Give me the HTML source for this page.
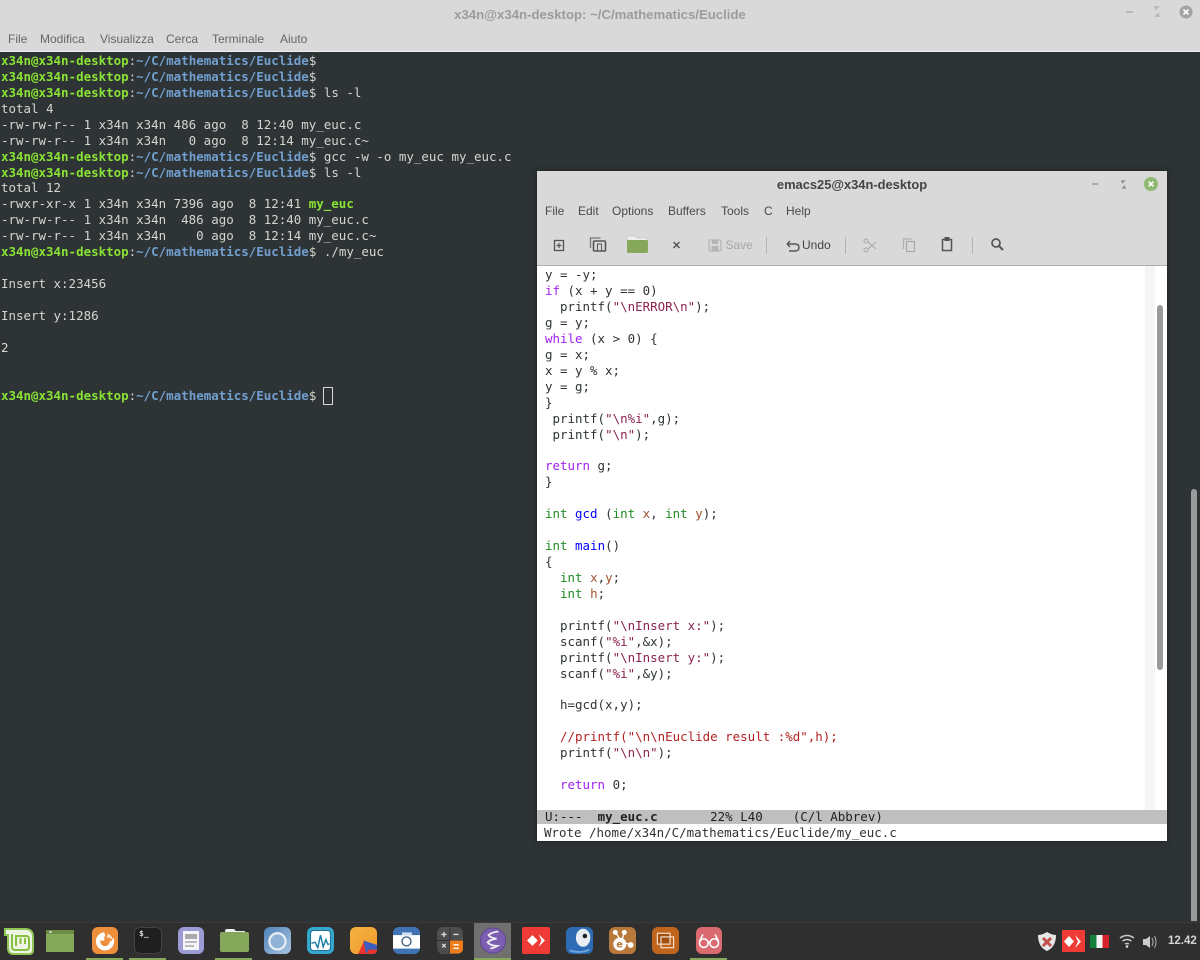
<!DOCTYPE html>
<html><head><meta charset="utf-8"><style>
html,body{margin:0;padding:0;background:#2e3436}
body{width:1200px;height:960px;position:relative;overflow:hidden;font-family:"DejaVu Sans","Liberation Sans",sans-serif}
#w{position:absolute;left:0;top:0;width:1200px;height:960px;overflow:hidden;background:#2e3436;filter:blur(.3px)}
div{position:absolute}
.m{font-family:"DejaVu Sans Mono","Liberation Mono",monospace;font-size:12.47px;line-height:16px;white-space:pre;height:16px}
.t{color:#d3d7cf;left:1px}
.g{color:#8ae234;font-weight:bold}
.b{color:#729fcf;font-weight:bold}
.e{color:#2e3436;left:545px}
.k{color:#a020f0}.s{color:#8b2252}.ty{color:#228b22}.v{color:#a0522d}.f{color:#0000ff}.c{color:#b22222}
.menu{font-family:"Liberation Sans",sans-serif;font-size:12px;color:#4a4a4a;white-space:pre;line-height:14px}
.ic{width:27px;height:27px;top:927px;border-radius:6px}
svg{position:absolute;overflow:visible}
svg.i{top:927px}
</style></head><body><div id="w">
<div style="left:0;top:0;width:1200px;height:52px;background:#d9d9d9;border-bottom:1px solid #f0f0f0;box-sizing:border-box"></div>
<div style="left:0;top:7px;width:1200px;text-align:center;font-family:'Liberation Sans',sans-serif;font-size:13.2px;font-weight:bold;color:#9c9c9c;line-height:15px">x34n@x34n-desktop: ~/C/mathematics/Euclide</div>
<div class="menu" style="left:8px;top:32px;color:#666">File</div>
<div class="menu" style="left:40px;top:32px;color:#666">Modifica</div>
<div class="menu" style="left:100px;top:32px;color:#666">Visualizza</div>
<div class="menu" style="left:166px;top:32px;color:#666">Cerca</div>
<div class="menu" style="left:212px;top:32px;color:#666">Terminale</div>
<div class="menu" style="left:280px;top:32px;color:#666">Aiuto</div>
<svg style="left:1060px;top:0" width="140" height="30"><path d="M66 12h7" stroke="#aaa" stroke-width="1.500"/><path d="M95 10l3-3h-4M99 13l-3 3h4" stroke="#b5b5b5" stroke-width="1.400" fill="none"/><circle cx="126" cy="12" r="6.500" fill="#a3a3a3"/><path d="M123.500 9.500l5 5M128.500 9.500l-5 5" stroke="#fff" stroke-width="1.600"/></svg>

<div class="m t" style="top:53px"><span class="g">x34n@x34n-desktop</span>:<span class="b">~/C/mathematics/Euclide</span>$</div>
<div class="m t" style="top:69px"><span class="g">x34n@x34n-desktop</span>:<span class="b">~/C/mathematics/Euclide</span>$</div>
<div class="m t" style="top:85px"><span class="g">x34n@x34n-desktop</span>:<span class="b">~/C/mathematics/Euclide</span>$ ls -l</div>
<div class="m t" style="top:101px">total 4</div>
<div class="m t" style="top:117px">-rw-rw-r-- 1 x34n x34n 486 ago  8 12:40 my_euc.c</div>
<div class="m t" style="top:133px">-rw-rw-r-- 1 x34n x34n   0 ago  8 12:14 my_euc.c~</div>
<div class="m t" style="top:149px"><span class="g">x34n@x34n-desktop</span>:<span class="b">~/C/mathematics/Euclide</span>$ gcc -w -o my_euc my_euc.c</div>
<div class="m t" style="top:165px"><span class="g">x34n@x34n-desktop</span>:<span class="b">~/C/mathematics/Euclide</span>$ ls -l</div>
<div class="m t" style="top:180px">total 12</div>
<div class="m t" style="top:196px">-rwxr-xr-x 1 x34n x34n 7396 ago  8 12:41 <span class="g">my_euc</span></div>
<div class="m t" style="top:212px">-rw-rw-r-- 1 x34n x34n  486 ago  8 12:40 my_euc.c</div>
<div class="m t" style="top:228px">-rw-rw-r-- 1 x34n x34n    0 ago  8 12:14 my_euc.c~</div>
<div class="m t" style="top:244px"><span class="g">x34n@x34n-desktop</span>:<span class="b">~/C/mathematics/Euclide</span>$ ./my_euc</div>
<div class="m t" style="top:276px">Insert x:23456</div>
<div class="m t" style="top:308px">Insert y:1286</div>
<div class="m t" style="top:340px">2</div>
<div class="m t" style="top:388px"><span class="g">x34n@x34n-desktop</span>:<span class="b">~/C/mathematics/Euclide</span>$</div>
<div style="left:323px;top:387px;width:8px;height:16px;border:1px solid #d3d7cf"></div>
<div style="left:1191px;top:489px;width:6px;height:432px;background:#9a9c9c;border-radius:3px 3px 0 0"></div>

<!-- emacs -->
<div style="left:537px;top:171px;width:630px;height:670px;background:#fff;box-shadow:0 0 6px #1c2022"></div>
<div style="left:537px;top:171px;width:630px;height:95px;background:#d9d9d9;border-bottom:1px solid #aeaeae;box-sizing:border-box"></div>
<div style="left:537px;top:177px;width:630px;text-align:center;font-family:'Liberation Sans',sans-serif;font-size:12.9px;font-weight:bold;color:#444;line-height:15px">emacs25@x34n-desktop</div>
<svg style="left:1085px;top:175px" width="80" height="20"><path d="M7 9h6" stroke="#999" stroke-width="1.500"/><path d="M37 8l2-2h-3M40 11l-2 2h3" stroke="#888" stroke-width="1.300" fill="none"/><circle cx="66" cy="9" r="7" fill="#8fb871"/><path d="M63.700 6.700l4.600 4.600M68.300 6.700l-4.600 4.600" stroke="#fff" stroke-width="1.600"/></svg>
<div class="menu" style="left:545px;top:204px">File</div>
<div class="menu" style="left:578px;top:204px">Edit</div>
<div class="menu" style="left:612px;top:204px">Options</div>
<div class="menu" style="left:668px;top:204px">Buffers</div>
<div class="menu" style="left:721px;top:204px">Tools</div>
<div class="menu" style="left:764px;top:204px">C</div>
<div class="menu" style="left:786px;top:204px">Help</div>
<svg style="left:537px;top:225px" width="630" height="40">
<rect x="17.500" y="15.500" width="9" height="10" fill="none" stroke="#555" stroke-width="1.300"/><path d="M22 18v5M19.500 20.500h5" stroke="#555" stroke-width="1.200"/>
<path d="M53.500 23v-10h10" fill="none" stroke="#777" stroke-width="1.300"/><rect x="56.500" y="16" width="12" height="10" rx="1" fill="none" stroke="#555" stroke-width="1.600"/><rect x="60.500" y="19" width="4" height="7" fill="none" stroke="#555"/>
<path d="M90 16v-3q0-2 2-2h6l2 2h9q2 0 2 2v1z" fill="#eee" stroke="#bbb" stroke-width=".5"/><rect x="90" y="15" width="21" height="13" rx="1.500" fill="#86a85a"/>
<path d="M136.500 17l6 6M142.500 17l-6 6" stroke="#555" stroke-width="1.500"/>
<rect x="172" y="15" width="12" height="11" rx="1" fill="none" stroke="#b5b5b5" stroke-width="1.200"/><rect x="175" y="15" width="6" height="4" fill="#b5b5b5"/><rect x="174.500" y="21" width="7" height="5" fill="#b5b5b5"/>
<text x="188.500" y="24" font-family="Liberation Sans" font-size="12" fill="#a6a6a6">Save</text>
<path d="M229.500 12v17M308.500 12v17M435.500 12v17" stroke="#b3b3b3"/>
<path d="M250 19h8q4 0 4 3.500t-4 3.500h-6M250 19l3-3M250 19l3 3" fill="none" stroke="#555" stroke-width="1.400"/>
<text x="265" y="24" font-family="Liberation Sans" font-size="12" fill="#444">Undo</text>
<circle cx="329" cy="16" r="2" fill="none" stroke="#a8a8a8"/><circle cx="329" cy="25" r="2" fill="none" stroke="#a8a8a8"/><path d="M331 17l8 7M331 24l8-7" stroke="#a8a8a8" stroke-width="1.100"/>
<path d="M366.500 24v-10h8" fill="none" stroke="#b0b0b0" stroke-width="1.200"/><rect x="369.500" y="16.500" width="8" height="10" fill="none" stroke="#aaa" stroke-width="1.200"/>
<rect x="405.500" y="14.500" width="9" height="11" fill="none" stroke="#555" stroke-width="1.500"/><rect x="407.500" y="12" width="5" height="4" fill="#555"/>
<circle cx="459" cy="18" r="4" fill="none" stroke="#555" stroke-width="1.700"/><path d="M462 21l4 4" stroke="#555" stroke-width="2"/>
</svg>
<div style="left:1145px;top:266px;width:10px;height:544px;background:#f5f5f5"></div>
<div style="left:1157px;top:305px;width:6px;height:365px;background:#9a9a9a;border-radius:3px"></div>
<div class="m e" style="top:267px">y = -y;</div>
<div class="m e" style="top:283px"><span class="k">if</span> (x + y == 0)</div>
<div class="m e" style="top:299px">  printf(<span class="s">"\nERROR\n"</span>);</div>
<div class="m e" style="top:315px">g = y;</div>
<div class="m e" style="top:331px"><span class="k">while</span> (x &gt; 0) {</div>
<div class="m e" style="top:347px">g = x;</div>
<div class="m e" style="top:363px">x = y % x;</div>
<div class="m e" style="top:379px">y = g;</div>
<div class="m e" style="top:395px">}</div>
<div class="m e" style="top:411px"> printf(<span class="s">"\n%i"</span>,g);</div>
<div class="m e" style="top:427px"> printf(<span class="s">"\n"</span>);</div>
<div class="m e" style="top:458px"><span class="k">return</span> g;</div>
<div class="m e" style="top:474px">}</div>
<div class="m e" style="top:506px"><span class="ty">int</span> <span class="f">gcd</span> (<span class="ty">int</span> <span class="v">x</span>, <span class="ty">int</span> <span class="v">y</span>);</div>
<div class="m e" style="top:538px"><span class="ty">int</span> <span class="f">main</span>()</div>
<div class="m e" style="top:554px">{</div>
<div class="m e" style="top:570px">  <span class="ty">int</span> <span class="v">x</span>,<span class="v">y</span>;</div>
<div class="m e" style="top:586px">  <span class="ty">int</span> <span class="v">h</span>;</div>
<div class="m e" style="top:618px">  printf(<span class="s">"\nInsert x:"</span>);</div>
<div class="m e" style="top:634px">  scanf(<span class="s">"%i"</span>,&amp;x);</div>
<div class="m e" style="top:650px">  printf(<span class="s">"\nInsert y:"</span>);</div>
<div class="m e" style="top:666px">  scanf(<span class="s">"%i"</span>,&amp;y);</div>
<div class="m e" style="top:697px">  h=gcd(x,y);</div>
<div class="m e" style="top:729px">  <span class="c">//printf("\n\nEuclide result :%d",h);</span></div>
<div class="m e" style="top:745px">  printf(<span class="s">"\n\n"</span>);</div>
<div class="m e" style="top:777px">  <span class="k">return</span> 0;</div>
<div style="left:537px;top:810px;width:630px;height:14px;background:#bfbfbf"></div>
<div class="m" style="left:545px;top:809px;color:#222">U:---  <b>my_euc.c</b>       22% L40    (C/l Abbrev)</div>
<div class="m" style="left:544px;top:825px;color:#2e3436">Wrote /home/x34n/C/mathematics/Euclide/my_euc.c</div>

<!-- panel -->
<div style="left:0;top:922px;width:1200px;height:38px;background:#2f2f2f;border-top:1px solid #3a3a3a;box-sizing:border-box"></div>
<div style="left:474px;top:923px;width:37px;height:37px;background:#707070"></div>
<div style="left:86px;top:958px;width:37px;height:2px;background:#86a85a"></div>
<div style="left:129px;top:958px;width:37px;height:2px;background:#86a85a"></div>
<div style="left:215px;top:958px;width:37px;height:2px;background:#86a85a"></div>
<div style="left:474px;top:958px;width:37px;height:2px;background:#86a85a"></div>
<div style="left:690px;top:958px;width:37px;height:2px;background:#86a85a"></div>

<svg style="left:0;top:922px" width="1200" height="38">
<path d="M5 7h20q8 0 8 8v13q0 4-4 4H14q-6 0-6-6V13H5z" fill="#eef5e2" stroke="#8fc655" stroke-width="2"/>
<path d="M12 12v13q0 3 3 3h11q3 0 3-3v-8q0-3-3-3H16v10M20.500 22v-6M25 22v-6" fill="none" stroke="#87c040" stroke-width="2"/>
<rect x="46" y="8" width="28" height="22" fill="#86a85a"/><rect x="46" y="8" width="28" height="4" fill="#6d8c45"/><rect x="49.500" y="9" width="2" height="2" fill="#ddd"/>
</svg>
<div class="ic" style="left:92px;width:26px;background:#ee8f3d"></div>
<svg class="i" style="left:92px" width="26" height="27" viewBox="0 0 30 30"><circle cx="15" cy="16" r="8" fill="none" stroke="#fff" stroke-width="5"/><path d="M14 4l14 4-6 8-6-2z" fill="#ee8f3d"/><path d="M18 7q6 2 6 8-3-4-7-3z" fill="#fbe3cb"/><circle cx="12" cy="13" r="2.500" fill="#fff"/></svg>
<div class="ic" style="left:134px;width:28px;background:#1e1e1e;box-shadow:inset 0 0 0 1px #444"></div>
<div style="left:139px;top:929px;font:bold 8px 'DejaVu Sans Mono',monospace;color:#ddd;line-height:10px">$_</div>
<div class="ic" style="left:178px;width:26px;background:#9d9bd6"></div>
<div style="left:183px;top:931px;width:16px;height:19px;background:#f4f4fa"></div>
<div style="left:185px;top:934px;width:12px;height:5px;background:#aaa"></div>
<div style="left:185px;top:941px;width:12px;height:2px;background:#bbb"></div>
<div style="left:185px;top:945px;width:9px;height:2px;background:#bbb"></div>
<svg style="left:220px;top:927px" width="29" height="27"><path d="M5 4q0-2 2-2h7l2 2h9v3H5z" fill="#eee"/><rect x="0" y="5" width="29" height="20" rx="2" fill="#86a85a"/></svg>
<div class="ic" style="left:264px;background:linear-gradient(135deg,#4f82bb,#a9c4de)"></div>
<svg class="i" style="left:264px" width="27" height="27" viewBox="0 0 30 30"><circle cx="15" cy="16" r="9" fill="#8fb2d6" stroke="#e7eef5" stroke-width="2.500"/></svg>
<div class="ic" style="left:307px;background:#35a6cc"></div>
<svg class="i" style="left:307px" width="27" height="27" viewBox="0 0 30 30"><rect x="4" y="4" width="22" height="22" rx="3" fill="#fff" stroke="#1c6e90"/><path d="M5 18l4-1 3 6 3-14 3 13 3-8 2 5h2" fill="none" stroke="#1c7ea6" stroke-width="1.600"/></svg>
<div class="ic" style="left:350px;background:linear-gradient(135deg,#f6b23f,#f09a2e)"></div>
<svg class="i" style="left:350px" width="27" height="27" viewBox="0 0 30 30"><path d="M9 30l7-15 4 15z" fill="#e5352e"/><path d="M15 15l15 5v5q0 5-5 5h-7z" fill="#3a5fc0"/><path d="M18 30l3-5 9 0v0q0 5-5 5z" fill="#e5352e"/></svg>
<div class="ic" style="left:393px;background:#3f73b4"></div>
<svg class="i" style="left:393px" width="27" height="27" viewBox="0 0 30 30"><rect x="0" y="9" width="30" height="15" fill="#fff"/><rect x="10" y="6" width="11" height="3" fill="#cfe0f0"/><circle cx="15" cy="16" r="5" fill="#fff" stroke="#3f5f80" stroke-width="1.500"/></svg>
<div class="ic" style="left:437px;width:26px;background:#4d4d4d"></div>
<svg class="i" style="left:437px" width="26" height="27" viewBox="0 0 30 30"><path d="M15 0v30M0 15h30" stroke="#2a2a2a"/><path d="M15 15h15v9q0 6-6 6h-9z" fill="#ef7d1a"/><path d="M5 8h6M8 5v6M19 8h6M6 19l4 4M10 19l-4 4" stroke="#ddd" stroke-width="1.500"/><path d="M19 20h6M19 24h6" stroke="#fff" stroke-width="1.500"/></svg>
<svg class="i" style="left:479px" width="28" height="27" viewBox="0 0 30 30"><circle cx="15" cy="15" r="14" fill="#7c5db0" stroke="#5d4490"/><path d="M21 5q-8 1-11 4q2 3 9 4q-7 1-10 4q3 4 11 4q-3 2-8 3" fill="none" stroke="#eee" stroke-width="2"/></svg>
<div class="ic" style="left:522px;width:28px;background:#ef3b36;border-radius:2px"></div>
<svg class="i" style="left:522px" width="28" height="27" viewBox="0 0 30 30"><path d="M11 9l6 6-6 6-6-6zM18 8l7 7-7 7 3-7z" fill="#fff"/></svg>
<div class="ic" style="left:566px;background:#2d6cb5"></div>
<svg class="i" style="left:566px" width="27" height="27" viewBox="0 0 30 30"><ellipse cx="19" cy="12" rx="8" ry="10" fill="#e8edf2"/><circle cx="21" cy="10" r="2.500" fill="#222"/><path d="M4 26q12 4 22-1" stroke="#72a6dc" stroke-width="2" fill="none"/></svg>
<div class="ic" style="left:609px;background:#b9793a"></div>
<svg class="i" style="left:609px" width="27" height="27" viewBox="0 0 30 30"><g stroke="#fff" stroke-width="1.500" fill="#fff"><path d="M14 16L7 6M14 16L17 6M14 16L24 20"/><circle cx="7" cy="6" r="2"/><circle cx="17" cy="6" r="2"/><circle cx="24" cy="20" r="2.500"/><circle cx="12" cy="19" r="6.500"/></g><text x="8" y="23" font-family="DejaVu Sans" font-size="11" font-weight="bold" fill="#b9793a">e</text></svg>
<div class="ic" style="left:652px;background:#c2651c"></div>
<svg class="i" style="left:652px" width="27" height="27" viewBox="0 0 30 30"><rect x="6" y="7" width="14" height="12" fill="#a04f10" stroke="#f4e2d0" stroke-width="1.300"/><rect x="10" y="11" width="14" height="12" fill="none" stroke="#f4e2d0" stroke-width="1.300"/></svg>
<div class="ic" style="left:696px;width:26px;background:#d96a70"></div>
<svg class="i" style="left:696px" width="26" height="27" viewBox="0 0 30 30"><circle cx="9" cy="18" r="5" fill="none" stroke="#fff" stroke-width="1.800"/><circle cx="21" cy="18" r="5" fill="none" stroke="#fff" stroke-width="1.800"/><path d="M14 17h2M4 16l4-8M26 16l-4-8" stroke="#fff" stroke-width="1.800" fill="none"/></svg>

<svg style="left:1030px;top:922px" width="170" height="38">
<path d="M17 10q5 3 9 3q0 12-9 16q-9-4-9-16q4 0 9-3z" fill="#e6e6e6"/><path d="M13 16l8 8M21 16l-8 8" stroke="#c4504d" stroke-width="3"/>
<rect x="32" y="8" width="23" height="22" fill="#ef3b36"/><path d="M39 14l5 5.500-5 5.500-5-5.500zM45 13l6 6.500-6 6.500 3-6.500z" fill="#fff"/>
<rect x="60" y="13" width="6.500" height="13" fill="#15803c"/><rect x="66.500" y="13" width="6" height="13" fill="#f4f4f4"/><rect x="72.500" y="13" width="6.500" height="13" fill="#d8232a"/>
<path d="M90 16q7-5 14 0M92.500 19q4.500-3 9 0M95 22q2-1 4 0" fill="none" stroke="#c8c8c8" stroke-width="1.500"/><circle cx="97" cy="24.500" r="1.300" fill="#ddd"/>
<path d="M113 17h3l4-3v12l-4-3h-3z" fill="#ccc"/><path d="M122 16q2 4 0 8M124.500 14q3 6 0 12" fill="none" stroke="#aaa" stroke-width="1.100"/>
</svg>
<div style="left:1168px;top:934px;font-family:'Liberation Sans',sans-serif;font-size:11.5px;font-weight:bold;color:#d4d4d4;line-height:15px">12.42</div>
</div></body></html>
